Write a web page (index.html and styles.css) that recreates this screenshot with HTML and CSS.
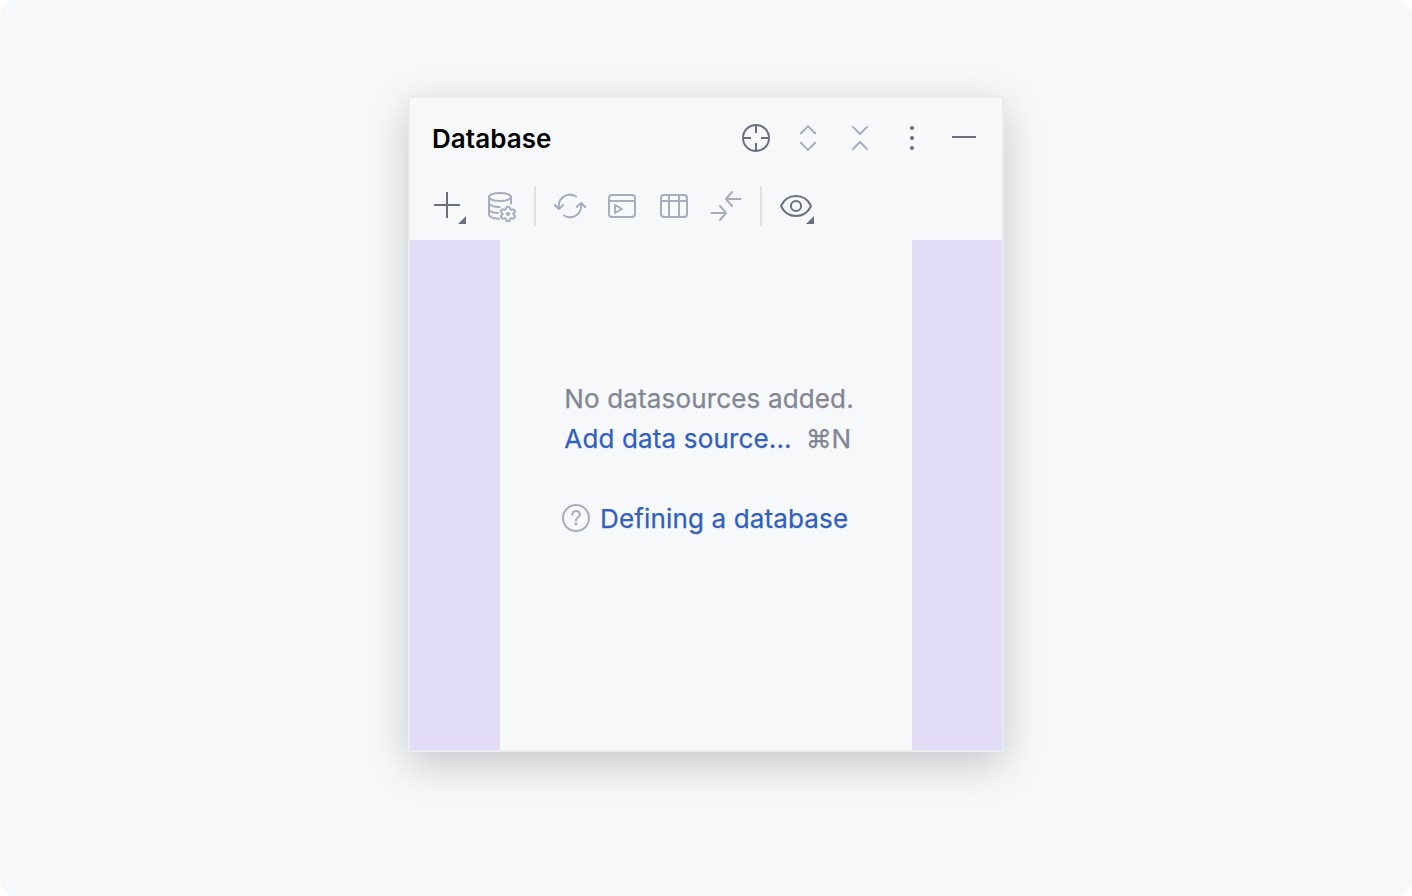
FILE: index.html
```html
<!DOCTYPE html>
<html lang="en">
<head>
<meta charset="utf-8">
<title>Database</title>
<link rel="stylesheet" href="styles.css">
</head>
<body>
<main class="stage">
  <section class="panel">
    <header class="header">
      <h1 class="title">Database</h1>
      <div class="actions">
        <svg class="icon" viewBox="0 0 32 32"><circle cx="16" cy="16" r="13"/><path d="M16 3v8M16 21v8M3 16h8M21 16h8"/></svg>
        <svg class="icon muted" viewBox="0 0 32 32"><path d="M8.900 11.200 16 4.100l7.100 7.100M8.900 20.800l7.100 7.100 7.100-7.100"/></svg>
        <svg class="icon muted" viewBox="0 0 32 32"><path d="M8.900 4.900 16 12l7.100-7.100M8.900 27.100l7.100-7.100 7.100 7.100"/></svg>
        <svg class="icon solid" viewBox="0 0 32 32"><circle cx="16" cy="6" r="2.100"/><circle cx="16" cy="16" r="2.100"/><circle cx="16" cy="26" r="2.100"/></svg>
        <svg class="icon" viewBox="0 0 32 32"><path d="M4 15h24"/></svg>
      </div>
    </header>
    <div class="toolbar">
      <div class="group">
        <svg class="icon" viewBox="0 0 32 32"><path d="M15 2v26M2 15h26"/><path class="corner" d="M34 26v8h-8z"/></svg>
        <svg class="icon muted" viewBox="0 0 32 32"><ellipse cx="16" cy="7" rx="11" ry="4"/><path d="M5 7v17.500c0 2.300 4 3.900 10 4.200M27 7v6.500M5 13c0 2.200 4.500 4 10.500 4M5 19c0 2.100 3.700 3.700 9 4"/><path d="M22.300 17.600Q22.500 16.800 24 16.800t1.700.8l.5 1.600 1.100.6 1.700-.4q1-.2 1.700 1.100t-.1 1.900L29.400 23.500v1l1.200 1.100q.8.600.1 1.900t-1.700 1.100l-1.700-.4-1.100.6-.5 1.600q-.2.800-1.700.8t-1.700-.8l-.5-1.600-1.100-.6-1.700.4q-1 .2-1.700-1.100t.1-1.900l1.200-1.100v-1l-1.200-1.100q-.8-.6-.1-1.900t1.700-1.100l1.700.4 1.100-.6z"/><circle class="dot" cx="24" cy="24" r="2.100"/></svg>
      </div>
      <div class="group">
        <svg class="icon muted" viewBox="0 0 32 32"><path d="M22 6.500A11.200 11.200 0 0 0 4.800 16v3M.8 15l4 4 4.500-4M10 25.500A11.200 11.200 0 0 0 27.200 16v-3M31.200 17l-4-4-4.500 4"/></svg>
        <svg class="icon muted" viewBox="0 0 32 32"><rect x="3" y="5" width="26" height="22" rx="3"/><path d="M3 11h26M9 15v8l7-4z"/></svg>
        <svg class="icon muted" viewBox="0 0 32 32"><rect x="3" y="5" width="26" height="22" rx="3"/><path d="M3 11h26M11 5v22M21 5v22"/></svg>
        <svg class="icon muted" viewBox="0 0 32 32"><path d="M30.500 9H16.500M22 2l-6 7 6 7M1.500 23h14M10 16l6 7-6 7"/></svg>
      </div>
      <div class="group">
        <svg class="icon" viewBox="0 0 32 32"><path d="M1 16C4 9.500 9.500 6 16 6s12 3.500 15 10c-3 6.500-8.500 10-15 10S4 22.500 1 16z"/><circle cx="16" cy="16" r="5.100"/><path class="corner" d="M34 26v8h-8z"/></svg>
      </div>
    </div>
    <div class="content">
      <div class="empty">
        <p class="line">No datasources added.</p>
        <p class="line shortcut-line"><a class="link">Add data source...</a><span class="shortcut">⌘N</span></p>
        <p class="line help">
          <svg class="icon muted" viewBox="0 0 32 32"><circle cx="16" cy="16" r="13"/><path d="M12.300 12.700c0-2.200 1.600-3.700 3.800-3.700s3.800 1.400 3.800 3.500c0 2.800-3.900 2.900-3.900 6.200"/><circle class="dot" cx="16" cy="22" r="1.500"/></svg>
          <a class="link">Defining a database</a>
        </p>
      </div>
    </div>
  </section>
</main>
</body>
</html>
```
FILE: styles.css
```css
* { box-sizing: border-box; }
body {
  margin: 0;
  background: #fff;
  font: 26px/40px Inter, sans-serif;
}
.stage {
  height: 896px;
  padding-top: 96px;
  border-radius: 16px;
  background: #f7f8fa;
}
.panel {
  width: 596px;
  height: 656px;
  margin: 0 auto;
  display: flex;
  flex-direction: column;
  border: 2px solid #ebecf0;
  background: #f7f8fa;
  box-shadow: 0 12px 40px rgba(0, 0, 0, .2);
}
.header {
  height: 80px;
  padding: 0 22px;
  display: flex;
  align-items: center;
  justify-content: space-between;
}
.title {
  margin: 0;
  padding-top: 2px;
  font-size: 26px;
  font-weight: 600;
  line-height: 40px;
  letter-spacing: .06px;
  color: #000;
}
.actions, .group { display: flex; gap: 20px; }
.icon {
  width: 32px;
  height: 32px;
  flex: none;
  display: block;
  overflow: visible;
  fill: none;
  stroke: #6c707e;
  stroke-width: 2;
  stroke-linejoin: round;
}
.muted { stroke: #a8adbd; stroke-linecap: round; }
.solid, .corner { fill: #6c707e; stroke: none; }
.dot { fill: #a8adbd; stroke: none; }
.toolbar {
  height: 62px;
  padding: 8px 22px 14px;
  display: flex;
}
.group { padding-right: 18px; align-items: center; }
.group + .group { padding-left: 18px; border-left: 2px solid #dfe1e5; }
.content {
  flex: 1;
  padding: 139px 0 0 62px;
  border: solid #e2dcf6;
  border-width: 0 90px;
}
.empty {
  width: 300px;
  color: #818594;
  letter-spacing: .15px;
  -webkit-text-stroke: .25px currentColor;
}
.line { margin: 0; padding-left: 2.3px; white-space: nowrap; }
.shortcut-line { display: flex; gap: 14px; }
.shortcut { letter-spacing: -.2px; }
.link { color: #315fbd; }
.help {
  margin-top: 40px;
  padding: 0;
  display: flex;
  align-items: center;
  gap: 8px;
}
.help .icon { margin: -2px 0 0 -2px; }
```
